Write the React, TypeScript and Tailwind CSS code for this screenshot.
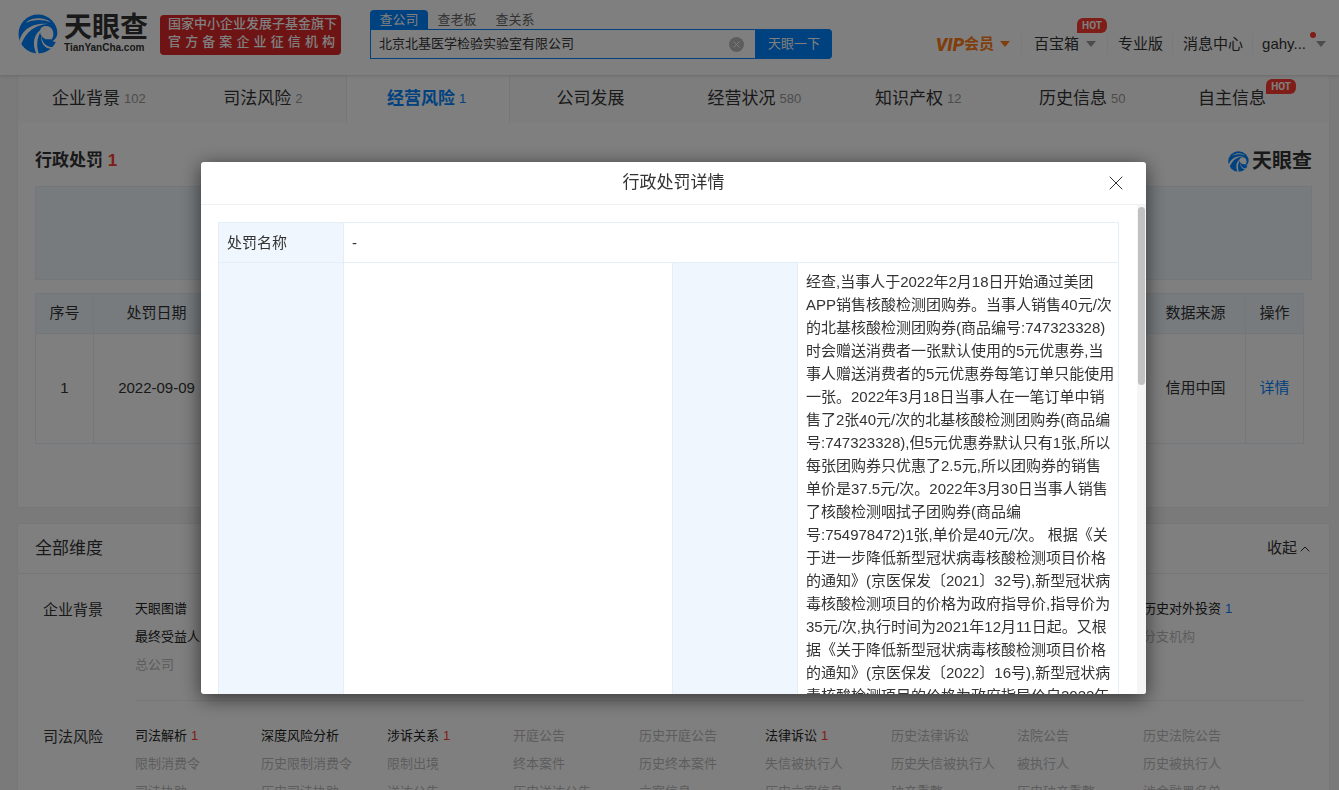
import { useState } from "react";
import { ChevronUp, X } from "lucide-react";

type DimensionItem = {
  name: string;
  count?: number;
  disabled?: boolean;
  history?: boolean;
};

type Dimension = {
  title: string;
  items: (DimensionItem | null)[];
};

const tabs = [
  { name: "企业背景", count: "102" },
  { name: "司法风险", count: "2" },
  { name: "经营风险", count: "1", active: true },
  { name: "公司发展" },
  { name: "经营状况", count: "580" },
  { name: "知识产权", count: "12" },
  { name: "历史信息", count: "50" },
  { name: "自主信息", hot: true },
];

const dimensions: Dimension[] = [
  {
    title: "企业背景",
    items: [
      { name: "天眼图谱" }, null, null, null, null, null, null, null,
      { name: "历史对外投资", count: 1, history: true },
      { name: "最终受益人" }, null, null, null, null, null, null, null,
      { name: "分支机构", disabled: true },
      { name: "总公司", disabled: true },
    ],
  },
  {
    title: "司法风险",
    items: [
      { name: "司法解析", count: 1 },
      { name: "深度风险分析" },
      { name: "涉诉关系", count: 1 },
      { name: "开庭公告", disabled: true },
      { name: "历史开庭公告", disabled: true },
      { name: "法律诉讼", count: 1 },
      { name: "历史法律诉讼", disabled: true },
      { name: "法院公告", disabled: true },
      { name: "历史法院公告", disabled: true },
      { name: "限制消费令", disabled: true },
      { name: "历史限制消费令", disabled: true },
      { name: "限制出境", disabled: true },
      { name: "终本案件", disabled: true },
      { name: "历史终本案件", disabled: true },
      { name: "失信被执行人", disabled: true },
      { name: "历史失信被执行人", disabled: true },
      { name: "被执行人", disabled: true },
      { name: "历史被执行人", disabled: true },
      { name: "司法协助", disabled: true },
      { name: "历史司法协助", disabled: true },
      { name: "送达公告", disabled: true },
      { name: "历史送达公告", disabled: true },
      { name: "立案信息", disabled: true },
      { name: "历史立案信息", disabled: true },
      { name: "破产重整", disabled: true },
      { name: "历史破产重整", disabled: true },
      { name: "涉金融黑名单", disabled: true },
    ],
  },
];

const facts = `经查,当事人于2022年2月18日开始通过美团
APP销售核酸检测团购券。当事人销售40元/次
的北基核酸检测团购券(商品编号:747323328)
时会赠送消费者一张默认使用的5元优惠券,当
事人赠送消费者的5元优惠券每笔订单只能使用
一张。2022年3月18日当事人在一笔订单中销
售了2张40元/次的北基核酸检测团购券(商品编
号:747323328),但5元优惠券默认只有1张,所以
每张团购券只优惠了2.5元,所以团购券的销售
单价是37.5元/次。2022年3月30日当事人销售
了核酸检测咽拭子团购券(商品编
号:754978472)1张,单价是40元/次。 根据《关
于进一步降低新型冠状病毒核酸检测项目价格
的通知》(京医保发〔2021〕32号),新型冠状病
毒核酸检测项目的价格为政府指导价,指导价为
35元/次,执行时间为2021年12月11日起。又根
据《关于降低新型冠状病毒核酸检测项目价格
的通知》(京医保发〔2022〕16号),新型冠状病
毒核酸检测项目的价格为政府指导价自2022年`;

const Swirl = ({ className }: { className: string }) => (
  <svg viewBox="0 0 40 40" className={className} aria-hidden="true">
    <circle cx="20" cy="20" r="19.5" fill="#0084ff" />
    {/* eye opening */}
    <path
      d="M23 14C27 10.500 32.500 12 34.500 16C36 19.500 35.500 23 33.500 25.500C31.500 24.800 28 26 26.500 24.500C22.500 22.500 21 18 23 14Z"
      fill="#fff"
    />
    <path d="M34.500 27C38 25 39.500 22 40 17V25C39 28 37 29 34.500 27Z" fill="#fff" />
    <path d="M1.500 27C4 17 12 8.800 30 9.800C17 11 8 17.500 3 30.500Z" fill="#fff" />
    <path d="M18.500 40C13.500 29.500 15.500 19 26 13.200C19.500 20.500 17.500 29 20.800 40Z" fill="#fff" />
    <path d="M23 21C24 29.500 29 33.800 36 33L34.500 34.800C27.500 35.200 22.500 30 23 21Z" fill="#fff" />
    <path d="M9 7.500C16 3.200 26 3 33 8.500C25 5.200 16 5.200 8 8.800Z" fill="#fff" />
  </svg>
);

const Caret = ({ className }: { className: string }) => (
  <svg viewBox="0 0 10 6" className={className} aria-hidden="true">
    <path d="M0 0h10L5 6z" fill="currentColor" />
  </svg>
);

const Hot = ({ className }: { className: string }) => (
  <span
    className={`absolute flex h-[15px] w-[30px] items-center justify-center rounded-t-md rounded-br-md bg-[#ff3b30] font-[Roboto] text-[10px] font-bold text-white ${className}`}
  >
    HOT
  </span>
);

const Header = () => {
  const [keyword, setKeyword] = useState("北京北基医学检验实验室有限公司");

  return (
    <header className="relative z-10 flex h-[75px] justify-between bg-white pl-[18px] pr-[13px] shadow-[0_1px_3px_rgba(0,0,0,0.15)]">
      <div className="flex">
        <a href="#" className="mt-[14px] flex h-10 gap-[6px]">
          <Swirl className="size-10" />
          <span className="flex flex-col text-[#333]">
            <span className="text-[28px] font-bold leading-[28px]">天眼查</span>
            <span className="text-[10px] font-bold leading-[12px]">TianYanCha.com</span>
          </span>
        </a>
        <div className="ml-[12px] mt-[15px] flex h-10 w-[181px] flex-col rounded-sm bg-[#dc2828] pl-2 pr-[6px] text-[13px] font-medium leading-[18px] text-white">
          <span className="whitespace-nowrap">国家中小企业发展子基金旗下</span>
          <span className="[text-align-last:justify]">官方备案企业征信机构</span>
        </div>
        <div className="ml-[29px] mt-[10px] w-[462px] text-[13px]">
          <div className="flex h-[19px] leading-[18px] text-[#666]">
            <button className="w-[58px] rounded-t-sm bg-[#0084ff] text-white">查公司</button>
            <button className="w-[58px]">查老板</button>
            <button className="w-[58px]">查关系</button>
          </div>
          <form className="flex h-[30px]" onSubmit={(e) => e.preventDefault()}>
            <div className="flex flex-1 items-center border border-[#0084ff] pl-2 pr-[11px]">
              <input
                aria-label="公司名称"
                className="flex-1 bg-transparent text-[#333] outline-none"
                value={keyword}
                onChange={(e) => setKeyword(e.target.value)}
              />
              <button
                type="button"
                aria-label="清空"
                className="flex size-[15px] items-center justify-center rounded-full bg-[#bbb] text-white"
                onClick={() => setKeyword("")}
              >
                <X size={11} />
              </button>
            </div>
            <button className="w-[76px] rounded-r-sm bg-[#0084ff] text-white">天眼一下</button>
          </form>
        </div>
      </div>
      <nav className="mt-[32px] flex h-6 items-center text-[15px] text-[#333]">
        <a href="#" className="flex items-center pr-[11px] font-bold text-[#ff7d18]">
          <span className="font-[Roboto] text-[18px] font-black italic">VIP</span>
          会员
          <Caret className="ml-[6px] h-[6px] w-[10px]" />
        </a>
        <a href="#" className="relative flex items-center border-l border-[#f5f5f5] pl-3 pr-[11px]">
          百宝箱
          <Caret className="ml-[7px] h-[6px] w-[10px] text-[#999]" />
          <Hot className="-top-[15px] left-[55px]" />
        </a>
        <a href="#" className="border-l border-[#f5f5f5] pl-[10px] pr-[9px]">专业版</a>
        <a href="#" className="border-l border-[#f5f5f5] pl-[10px] pr-[9px]">消息中心</a>
        <a href="#" className="relative flex items-center border-l border-[#f5f5f5] pl-[9px]">
          gahy...
          <Caret className="ml-[10px] h-[6px] w-[10px] text-[#999]" />
          <span className="absolute -top-[1px] right-[10px] size-[6px] rounded-full bg-[#ff3b30]" />
        </a>
      </nav>
    </header>
  );
};

const TabBar = () => (
  <nav className="grid h-12 grid-cols-8 bg-[#fafafa]">
    {tabs.map((tab) => (
      <a
        key={tab.name}
        href="#"
        className={`relative flex items-center justify-center gap-1 whitespace-nowrap text-[17px] ${
          tab.active
            ? "border-x border-[#eee] bg-white font-bold text-[#0084ff]"
            : "text-[#333]"
        } ${tab.hot ? "pr-[30px]" : "pr-[2px]"}`}
      >
        {tab.name}
        {tab.count && (
          <span className={`text-[13px] ${tab.active ? "font-normal" : "text-[#999]"}`}>
            {tab.count}
          </span>
        )}
        {tab.hot && <Hot className="left-[101px] top-[4px]" />}
      </a>
    ))}
  </nav>
);

const Penalties = ({ onDetail }: { onDetail: () => void }) => (
  <section className="h-[384px] px-[17px] pt-6 text-[#333]">
    <div className="flex h-[28px] items-center justify-between">
      <h2 className="text-[17px] font-bold">
        行政处罚 <span className="text-[#ff3b30]">1</span>
      </h2>
      <span className="flex items-center gap-[3px] text-[20px] font-bold text-[#333]">
        <Swirl className="size-[21px]" />
        天眼查
      </span>
    </div>
    <div className="mt-[11px] h-[94px] border border-[#e3eef6] bg-[#eff6fc]" />
    <div className="mt-[13px] pr-2">
      <table className="w-full table-fixed border-collapse text-center text-[15px] [&_td]:border [&_td]:border-[#e3eef6] [&_th]:border [&_th]:border-[#e3eef6] [&_th]:font-normal">
        <thead>
          <tr className="h-10 bg-[#eff6fc]">
            <th className="w-[58px]">序号</th>
            <th className="w-[126px]">处罚日期</th>
            <th />
            <th className="w-[100px]">数据来源</th>
            <th className="w-[58px]">操作</th>
          </tr>
        </thead>
        <tbody>
          <tr className="h-[110px]">
            <td>1</td>
            <td>2022-09-09</td>
            <td />
            <td>信用中国</td>
            <td>
              <button className="text-[#0084ff]" onClick={onDetail}>详情</button>
            </td>
          </tr>
        </tbody>
      </table>
    </div>
  </section>
);

const Dimensions = () => (
  <section className="mt-[15px] border border-[#eee] bg-white text-[#333]">
    <div className="flex h-[50px] items-center justify-between border-b border-[#eee] px-4">
      <h2 className="pl-px text-[17px]">全部维度</h2>
      <button className="flex items-center text-[15px]">
        收起
        <ChevronUp size={16} strokeWidth={1.5} />
      </button>
    </div>
    {dimensions.map((group) => (
      <div key={group.title} className="flex px-[25px]">
        <h3 className="w-[92px] pt-[22px] text-[15px] leading-[28px]">{group.title}</h3>
        <ul className="grid flex-1 grid-cols-[repeat(9,126px)] border-b border-[#eee] pb-[21px] pt-[21px] text-[13px] leading-[28px]">
          {group.items.map((item, i) => (
            <li key={i} className="whitespace-nowrap">
              {item && (
                <a href="#" className={item.disabled ? "text-[#bbb]" : "text-[#222]"}>
                  {item.name}
                  {item.count && (
                    <span className={`ml-1 ${item.history ? "text-[#0084ff]" : "text-[#ff3b30]"}`}>
                      {item.count}
                    </span>
                  )}
                </a>
              )}
            </li>
          ))}
        </ul>
      </div>
    ))}
  </section>
);

const DetailDialog = ({ onClose }: { onClose: () => void }) => (
  <div className="fixed inset-0 z-20 flex items-start justify-center bg-black/50 pl-2 pt-[162px]">
    <div
      role="dialog"
      aria-labelledby="detail-title"
      className="flex max-h-[532px] w-full max-w-[945px] flex-col overflow-hidden rounded-[3px] bg-white text-[#333] shadow-[0_4px_20px_rgba(0,0,0,0.6)]"
    >
      <div className="flex h-[43px] shrink-0 items-center border-b border-[#f0f0f0] pl-[42px] pr-[18px]">
        <h2 id="detail-title" className="flex-1 text-center text-[17px]">行政处罚详情</h2>
        <button aria-label="关闭" onClick={onClose}>
          <X size={24} strokeWidth={1} />
        </button>
      </div>
      <div className="flex min-h-0 flex-1">
        <div className="min-w-0 flex-1 overflow-y-auto pl-[17px] pr-[18px] pt-[17px] [scrollbar-width:none]">
          <table className="w-full table-fixed border-collapse text-[15px] leading-[23px] [&_td]:border [&_td]:border-[#e3eef6] [&_td]:px-2 [&_th]:border [&_th]:border-[#e3eef6] [&_th]:bg-[#eff6fd] [&_th]:px-2 [&_th]:text-left [&_th]:font-normal">
            <colgroup>
              <col className="w-[125px]" />
              <col />
              <col className="w-[125px]" />
              <col className="w-[321px]" />
            </colgroup>
            <tbody>
              <tr className="h-10">
                <th>处罚名称</th>
                <td colSpan={3}>-</td>
              </tr>
              <tr>
                <th />
                <td />
                <th />
                <td className="whitespace-pre py-[7px]">{facts}</td>
              </tr>
            </tbody>
          </table>
        </div>
        <div className="w-[9px] bg-[#f5f5f5] px-px pt-[2px]">
          <div className="h-[178px] rounded-full bg-[#c1c1c1]" />
        </div>
      </div>
    </div>
  </div>
);

const App = () => {
  const [open, setOpen] = useState(true);

  return (
    <div
      className={`min-h-screen bg-[#f5f5f5] font-['Liberation_Sans','Noto_Sans_CJK_SC',sans-serif] ${
        open ? "h-screen overflow-hidden" : ""
      }`}
    >
      <Header />
      <main className="pl-[17px] pr-[9px]">
        <div className="border-x border-b border-[#eee] bg-white">
          <TabBar />
          <Penalties onDetail={() => setOpen(true)} />
        </div>
        <Dimensions />
      </main>
      {open && <DetailDialog onClose={() => setOpen(false)} />}
    </div>
  );
};

export default App;
